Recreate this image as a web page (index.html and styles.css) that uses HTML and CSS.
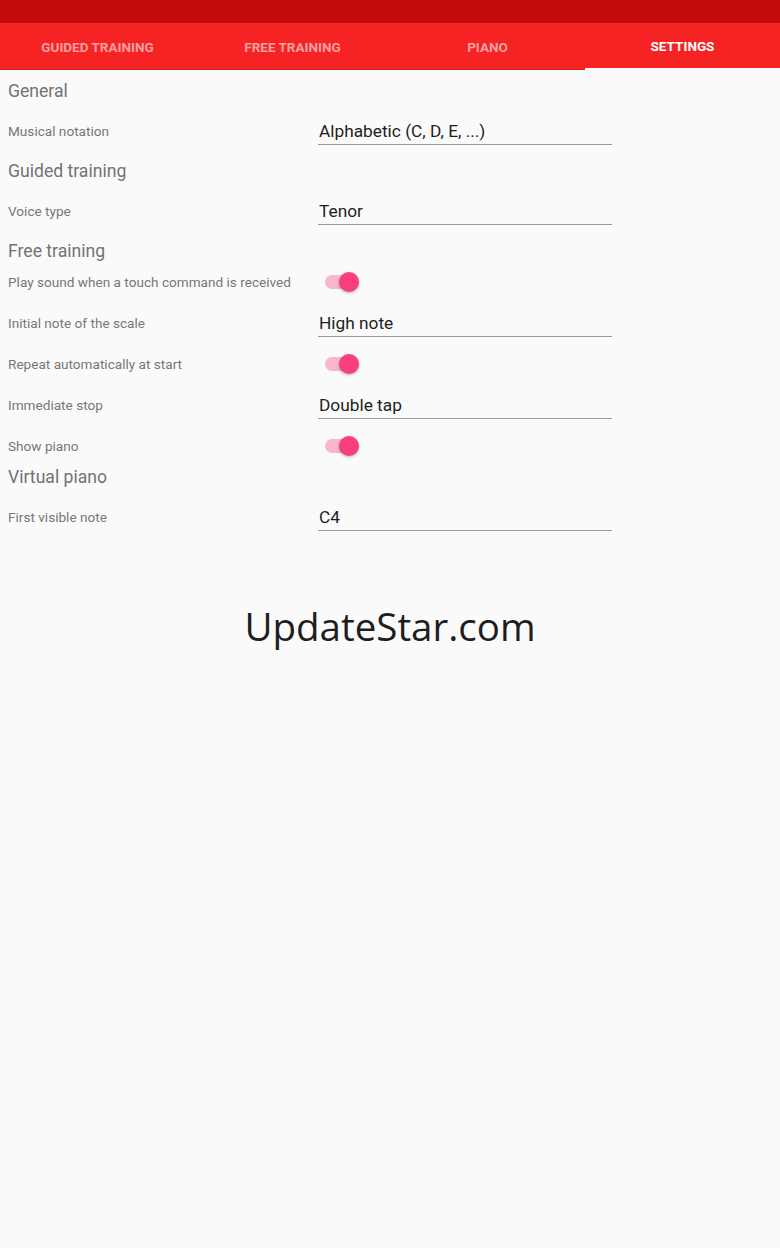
FILE: index.html
```html
<!DOCTYPE html>
<html lang="en">
<head>
  <meta charset="UTF-8" />
  <meta name="viewport" content="width=device-width, initial-scale=1.0"/>
  <title>Settings</title>
  <link rel="stylesheet" href="styles.css">
</head>
<body>
  <div class="status-bar"></div>

  <!-- Tabs -->
  <nav class="tabs">
    <div class="tab">Guided training</div>
    <div class="tab">Free training</div>
    <div class="tab">Piano</div>
    <div class="tab active">Settings</div>
  </nav>

  <!-- Preferences -->
  <main class="prefs">
    <div class="pref-header">General</div>
    <div class="pref-row spinner-row">
      <span class="pref-label">Musical notation</span>
      <span class="pref-value">Alphabetic (C, D, E, ...)</span>
    </div>

    <div class="pref-header">Guided training</div>
    <div class="pref-row spinner-row">
      <span class="pref-label">Voice type</span>
      <span class="pref-value">Tenor</span>
    </div>

    <div class="pref-header">Free training</div>
    <div class="pref-row switch-row">
      <span class="pref-label">Play sound when a touch command is received</span>
      <span class="switch"><span class="track"></span><span class="thumb"></span></span>
    </div>
    <div class="pref-row spinner-row">
      <span class="pref-label">Initial note of the scale</span>
      <span class="pref-value">High note</span>
    </div>
    <div class="pref-row switch-row">
      <span class="pref-label">Repeat automatically at start</span>
      <span class="switch"><span class="track"></span><span class="thumb"></span></span>
    </div>
    <div class="pref-row spinner-row">
      <span class="pref-label">Immediate stop</span>
      <span class="pref-value">Double tap</span>
    </div>
    <div class="pref-row switch-row">
      <span class="pref-label">Show piano</span>
      <span class="switch"><span class="track"></span><span class="thumb"></span></span>
    </div>

    <div class="pref-header">Virtual piano</div>
    <div class="pref-row spinner-row">
      <span class="pref-label">First visible note</span>
      <span class="pref-value">C4</span>
    </div>
  </main>

  <div class="watermark">UpdateStar.com</div>
</body>
</html>
```

FILE: styles.css
```css
* {
  margin: 0;
  padding: 0;
  box-sizing: border-box;
}
body {
  font-family: Roboto, 'Liberation Sans', sans-serif;
  background: #fafafa;
  color: #212121;
  width: 780px;
  height: 1248px;
  overflow: hidden;
}
.status-bar {
  height: 23px;
  background: #c30b0b;
}

/* Tabs */
.tabs {
  display: grid;
  grid-template-columns: repeat(4, 1fr);
  height: 47px;
  background: #f52323;
  border-bottom: 1px solid #e01818;
}
.tab {
  display: flex;
  align-items: center;
  justify-content: center;
  text-transform: uppercase;
  font-size: 13.5px;
  font-weight: 700;
  color: rgba(255, 255, 255, 0.58);
  padding-top: 1px;
}
.tab.active {
  color: #fff;
  border-bottom: 2px solid #fafafa;
  margin-bottom: -1px;
}

/* Preferences */
.prefs {
  padding: 6px 0 0 8px;
}
.pref-header {
  height: 30px;
  display: flex;
  align-items: center;
  font-size: 17.6px;
  color: #737373;
}
.pref-row {
  display: grid;
  grid-template-columns: 310px 294px;
  align-items: center;
}
.spinner-row {
  height: 50px;
}
.switch-row {
  height: 32px;
}
.pref-label {
  font-size: 13.6px;
  color: #777;
}
.pref-value {
  font-size: 17.3px;
  color: #1e1e1e;
  padding: 2px 0 3px 1px;
  margin-top: 1px;
  border-bottom: 1.5px solid #9a9a9a;
}

/* Switch */
.switch {
  position: relative;
  width: 36px;
  height: 22px;
  margin-left: 5px;
}
.track {
  position: absolute;
  left: 2px;
  top: 4px;
  width: 32px;
  height: 14px;
  border-radius: 7px;
  background: #f8b7cc;
}
.thumb {
  position: absolute;
  right: 0;
  top: 1px;
  width: 20px;
  height: 20px;
  border-radius: 50%;
  background: #fa3e7c;
  box-shadow: 0 1px 3px rgba(0, 0, 0, 0.3);
}

/* Watermark */
.watermark {
  margin-top: 58px;
  text-align: center;
  font-family: 'Open Sans', sans-serif;
  font-size: 38.5px;
  color: #1e1e1e;
}
```
